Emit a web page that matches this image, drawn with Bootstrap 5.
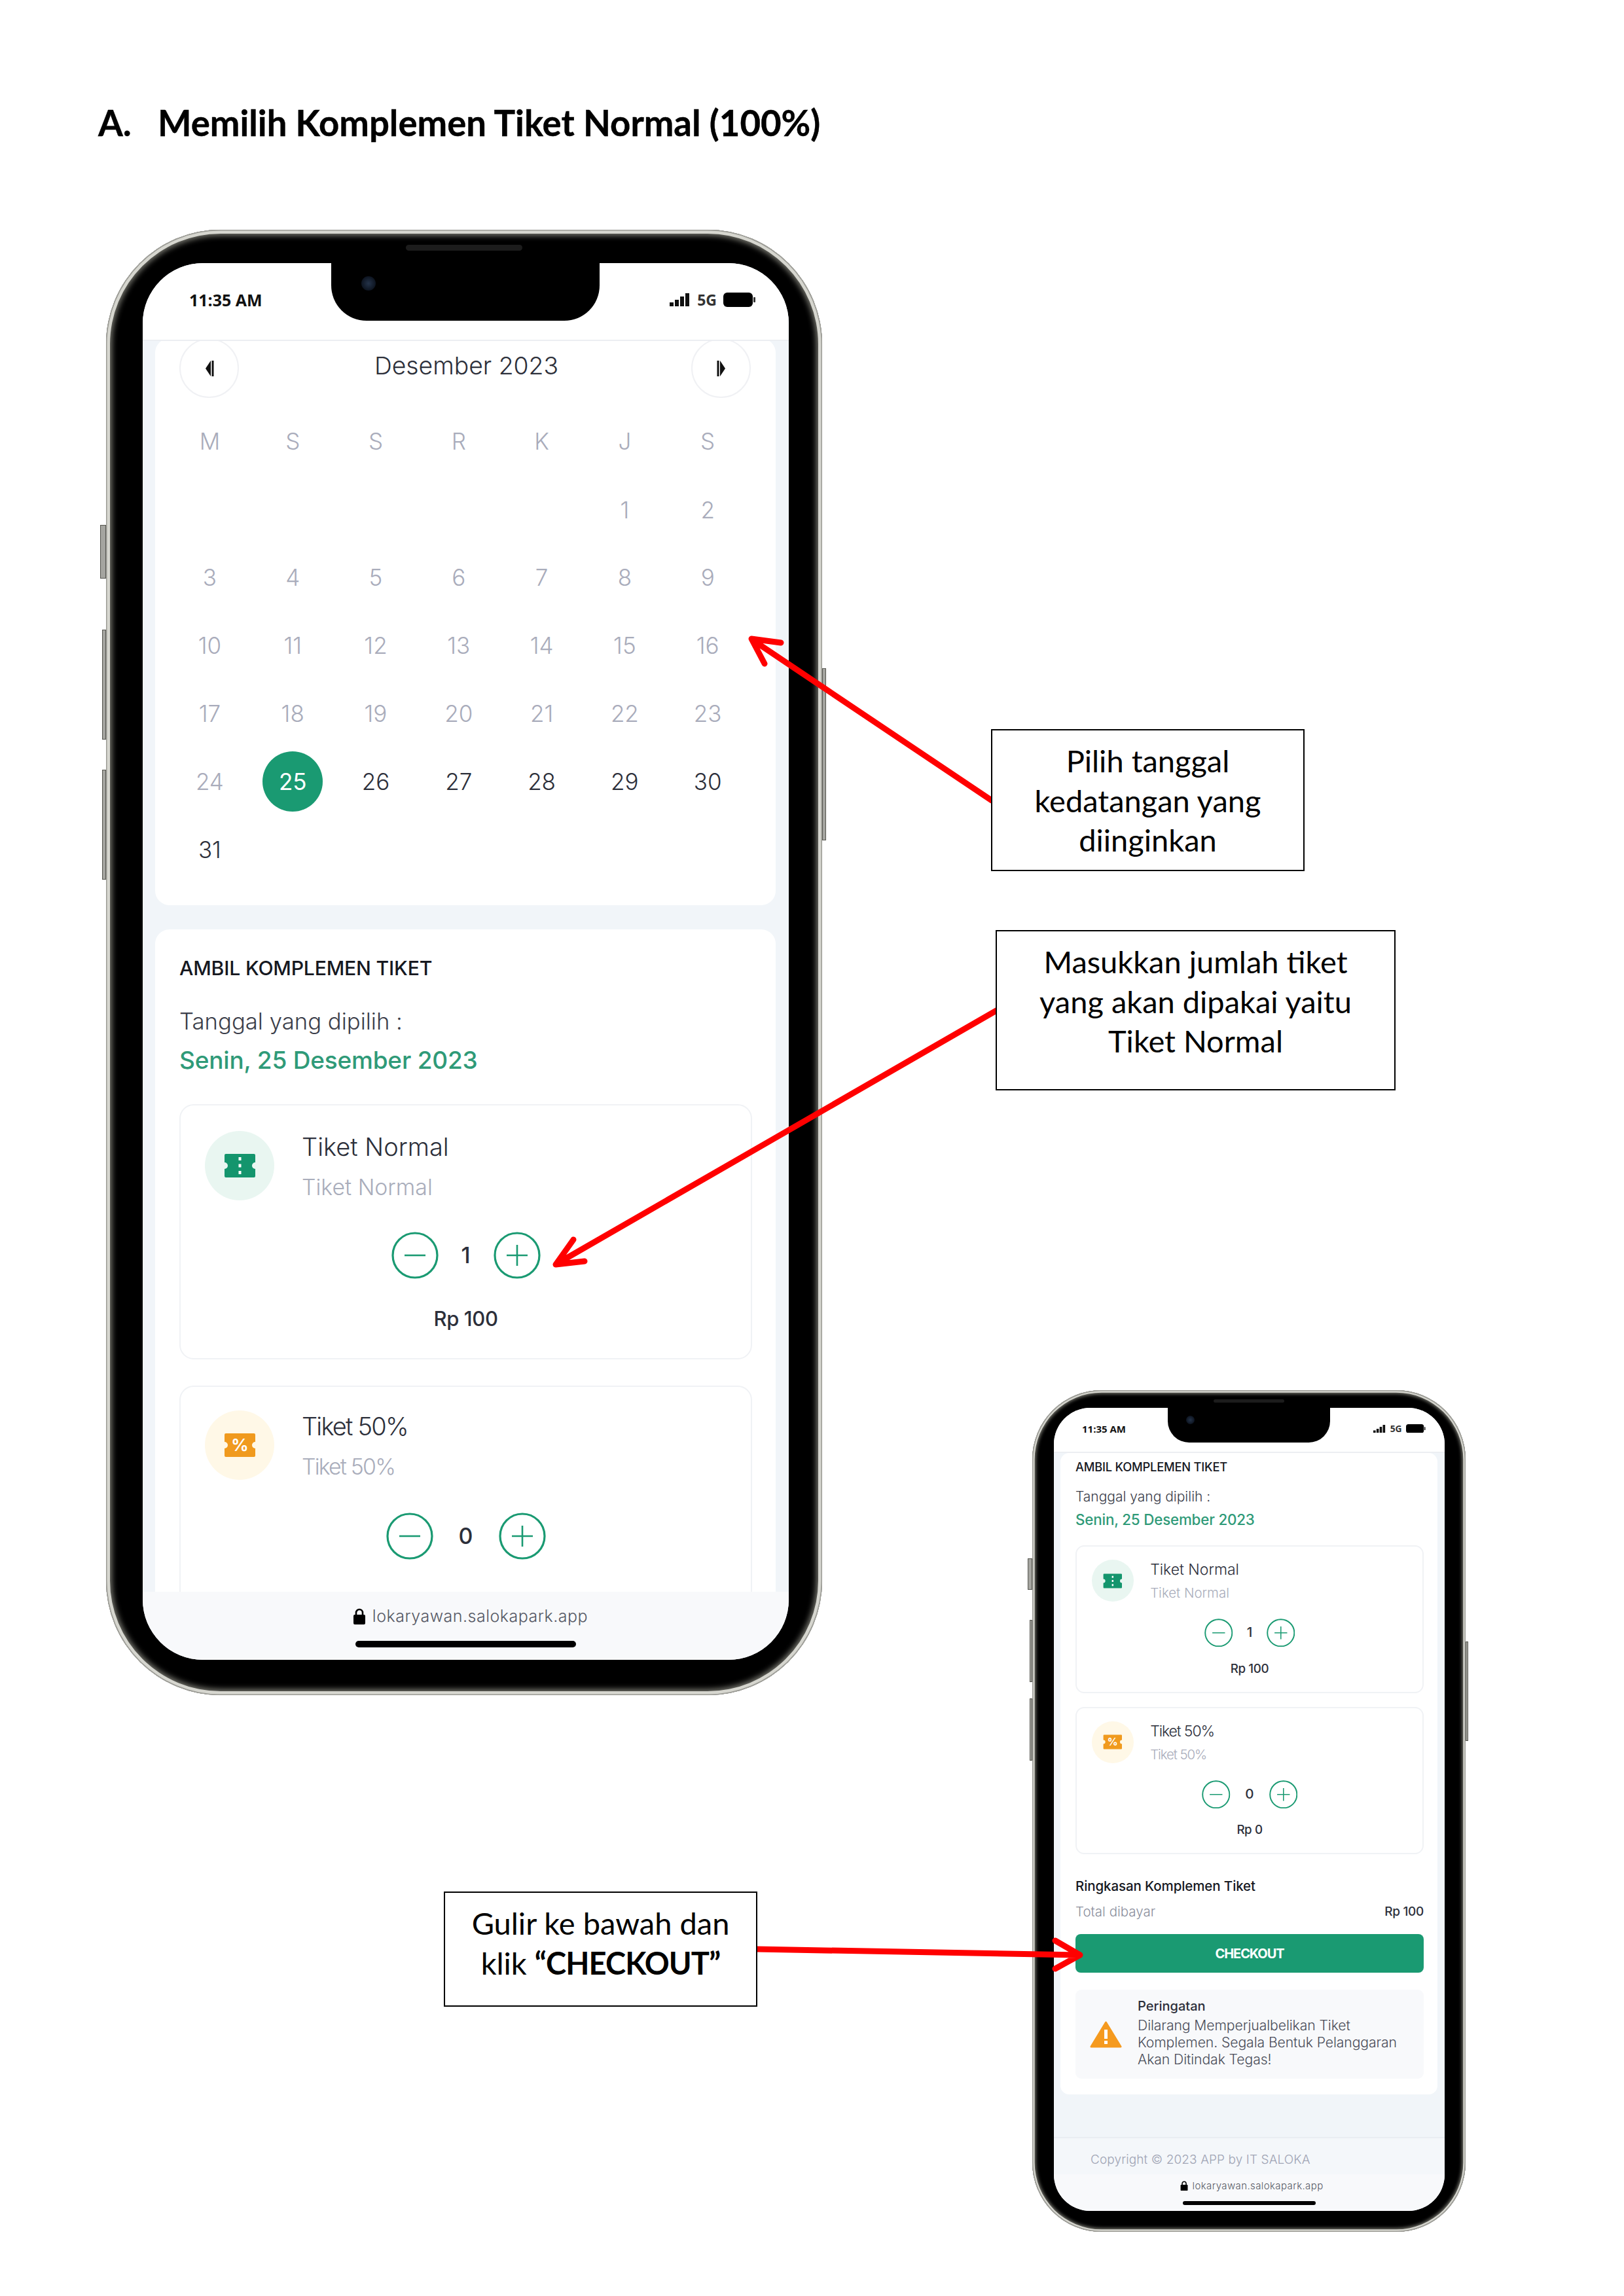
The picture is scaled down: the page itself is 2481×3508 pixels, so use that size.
<!DOCTYPE html>
<html lang="id">
<head>
<meta charset="utf-8">
<title>Memilih Komplemen Tiket Normal</title>
<link href="https://cdn.jsdelivr.net/npm/bootstrap@5.3.0/dist/css/bootstrap.min.css" rel="stylesheet">
<style>
body{margin:0;background:#fff}
.sheet{width:2481px;height:3508px;overflow:hidden;background:#fff;font-family:Inter,"Noto Sans",sans-serif}
.doc-title{padding:155px 0 0 150px;font-family:Lato,"Liberation Sans",sans-serif;font-weight:700;font-size:54.500px;line-height:64px;color:#000;-webkit-text-stroke:.4px #000}
.doc-title .num{width:91px}

.phone{position:absolute;background:#000;box-shadow:inset 0 0 0 1.500px #9c9c96,inset 0 0 0 calc(6px*var(--u)) #d6d6cf,inset 0 0 calc(9px*var(--u)) calc(9px*var(--u)) #77776f;display:flex}
.ph-lg{--u:1;left:162px;top:351px;width:1094px;height:2239px;border-radius:175px;padding:51px 51px 54px 56px}
.ph-sm{--u:.605;left:1577px;top:2124px;width:662px;height:1286px;border-radius:106px;padding:27px 32px 32px 33px}
.side-btn{position:absolute;background:#a5a5a0;border:1px solid #55554f}
.ph-lg .b1{left:-9px;top:451px;width:9px;height:82px}
.ph-lg .b2{left:-6px;top:611px;width:6px;height:168px}
.ph-lg .b3{left:-6px;top:825px;width:6px;height:168px}
.ph-lg .b4{right:-6px;top:670px;width:6px;height:263px}
.ph-sm .b1{left:-7px;top:257px;width:7px;height:48px}
.ph-sm .b2{left:-4px;top:351px;width:4px;height:95px}
.ph-sm .b3{left:-4px;top:471px;width:4px;height:95px}
.ph-sm .b4{right:-4px;top:384px;width:4px;height:152px}
.speaker{position:absolute;background:#1c1c1c;border-radius:5px;left:calc(458px*var(--u));width:calc(178px*var(--u));top:calc(23px*var(--u));height:calc(9px*var(--u))}

.screen{position:relative;flex:1 1 auto;min-width:0;background:#f1f5f9;overflow:hidden;display:flex;flex-direction:column;border-radius:calc(92px*var(--u))}
.notch{position:absolute;top:0;background:#000;z-index:3;left:calc(288px*var(--u));width:calc(410px*var(--u));height:calc(88px*var(--u));border-radius:0 0 calc(54px*var(--u)) calc(54px*var(--u))}
.cam{position:absolute;border-radius:50%;background:radial-gradient(circle,#243349 0,#0d1420 70%);left:calc(46px*var(--u));top:calc(20px*var(--u));width:calc(22px*var(--u));height:calc(22px*var(--u))}
.status{background:#fff;border-bottom:2px solid #eceef2;flex:0 0 auto;position:relative;z-index:2;font-family:"Open Sans",sans-serif;font-weight:700;color:#111}
.ph-lg .status{height:119px;padding:36px 50px 0 71px;font-size:25px;line-height:40px}
.ph-sm .status{height:69px;padding:20px 29px 0 43px;font-size:15px;line-height:24px}
.sig{width:calc(32px*var(--u));height:calc(20px*var(--u))}
.batt{width:calc(50px*var(--u));height:calc(22px*var(--u))}
.fiveg{font-size:calc(23px*var(--u));color:#333;margin:0 calc(10px*var(--u))}
.scroll{flex:1 1 0;min-height:0;overflow:hidden}

.panel{background:#fff;border-radius:calc(22px*var(--u))}
.ph-lg .panel{margin:0 20px 0 19px}
.ph-sm .panel{margin:0 11px 0 10px}
.cal-panel{padding:0 41px 33px 20px;margin-bottom:37px!important}
.cal-nav{margin-top:-4px;height:91px;position:relative}
.cal-nav .nav-c{width:91px;height:91px;border:2px solid #f0f1f4;background:#fff;position:absolute;top:0}
.nav-c.p1{left:17px}
.nav-c.p2{left:799px}
.cal-nav .mon{width:100%;padding-left:24px;text-align:center;font-size:37.300px;font-weight:300;line-height:84px;color:#2c2f3a}
.cal-grid{display:grid;grid-template-columns:repeat(7,126.8px);grid-template-rows:106px;grid-auto-rows:103.8px;margin-top:13px;font-size:35px;font-weight:300;color:#a9acbb}
.cal-grid>span{display:flex;align-items:center;justify-content:center}
.cal-grid .on{color:#2c2f3a}
.cal-grid .sel{background:#1a9a72;color:#fff;width:92px;height:92px;border-radius:50%;align-self:center;justify-self:center;font-weight:400}

.title{font-weight:500;color:#16181f;font-size:calc(30.2px*var(--u));letter-spacing:-.2px}
.chosen{font-weight:300;color:#3b3e4a;font-size:calc(34.7px*var(--u))}
.datev{font-weight:500;color:#2f9a78;font-size:calc(37px*var(--u));letter-spacing:-.2px}
.tname{font-weight:300;color:#2c2f3a;font-size:calc(38px*var(--u))}
.tsub{font-weight:300;color:#a9adbb;font-size:calc(33.800px*var(--u))}
.pct{letter-spacing:calc(-1.800px*var(--u))}
.price{font-weight:500;color:#2c2f3a;font-size:calc(31px*var(--u));letter-spacing:-.4px;text-align:center}
.qty{font-weight:500;color:#2c2f3a;font-size:calc(34px*var(--u));text-align:center}
.tbox{border:2px solid #f0f2f5;border-radius:calc(22px*var(--u))}
.ico{border-radius:50%;flex:0 0 auto;display:flex;align-items:center;justify-content:center;width:calc(106px*var(--u));height:calc(106px*var(--u))}
.ico svg{width:calc(49px*var(--u));height:calc(38px*var(--u))}
.ico.gr{background:#e9f6f1}
.ico.am{background:#fff8e7}
.rnd{width:calc(72px*var(--u));height:calc(72px*var(--u));flex:0 0 auto;display:block}

/* big phone flow */
.ph-lg .t-panel{padding:39px 36px 0 37px;height:1200px}
.ph-lg .title{line-height:40px}
.ph-lg .chosen{line-height:44px;margin-top:39px}
.ph-lg .datev{line-height:44px;margin-top:16px}
.ph-lg .tbox{margin-top:45px;padding:39px 37px 40px}
.ph-lg .tbox+.tbox{margin-top:40px;padding-top:36px;min-height:420px}
.ph-lg .tbox+.tbox .cnt{margin-top:50px}
.ph-lg .tgap{gap:42px}
.ph-lg .tname{line-height:44px;margin-top:2px}
.ph-lg .tsub{line-height:40px;margin-top:20px}
.ph-lg .cnt{margin-top:48px}
.ph-lg .price{line-height:40px;margin-top:41px}
.ph-lg .q1{width:84px}
.ph-lg .q0{width:100px}

/* small phone flow */
.ph-sm .t-panel{padding:9px 21px 24px 23px}
.ph-sm .title{line-height:24px}
.ph-sm .chosen{line-height:28px;margin-top:20px}
.ph-sm .datev{line-height:28px;margin-top:7px}
.ph-sm .tbox{margin-top:25px;padding:20px 23px 23px}
.ph-sm .tbox+.tbox{margin-top:21px}
.ph-sm .tgap{gap:25px}
.ph-sm .tname{line-height:28px;margin-top:1px}
.ph-sm .tsub{line-height:24px;margin-top:10px}
.ph-sm .cnt{margin-top:26px}
.ph-sm .price{line-height:24px;margin-top:21px}
.ph-sm .q1{width:51px}
.ph-sm .q0{width:59px}
.sum-h{font-weight:500;font-size:20.500px;line-height:26px;margin-top:36px;color:#16181f;letter-spacing:-.1px}
.sum-r{font-size:19px;line-height:26px;margin-top:13px}
.sum-r .lb{font-weight:300;color:#8b8f9d;font-size:20.500px}
.sum-r .vl{font-weight:500;color:#2c2f3a;letter-spacing:-.3px}
.pay{display:block;width:100%;margin-top:21px;height:59px;border-radius:8px;background:#1a9a72;border:0;color:#fff;font-weight:700;font-size:20px;letter-spacing:-1.100px}
.warnb{margin-top:26px;height:136px;background:#f8f9fb;border-radius:9px;padding:12px 10px 0 22px;gap:24px}
.warnb svg{width:49px;height:42px;flex:0 0 auto;margin-top:36px}
.warn-h{font-weight:500;font-size:20px;line-height:26px;color:#2c2f3a}
.warn-t{font-weight:300;font-size:21.200px;line-height:26px;color:#4a4d59;letter-spacing:-.1px;margin-top:3px;white-space:nowrap}
.foot{margin-top:65px;border-top:2px solid #e9edf2;background:#f4f7fa;height:60px;padding:21px 0 0 56px;font-weight:300;font-size:19px;line-height:24px;color:#9fa4b4;letter-spacing:.1px}

.urlbar{background:#f8f9fb;flex:0 0 auto;position:relative;font-weight:300;color:#565965;letter-spacing:.5px}
.ph-lg .urlbar{height:104px;padding-top:22px;font-size:25px;line-height:30px}
.ph-sm .urlbar{height:56px;padding-top:9px;font-size:15px;line-height:18px;letter-spacing:.4px}
.ph-lg .urlrow{padding-left:14px}
.ph-sm .urlrow{padding-left:8px}
.lock{width:calc(20px*var(--u));height:calc(25px*var(--u));margin-right:calc(10px*var(--u))}
.home{background:#000;border-radius:6px;width:calc(337px*var(--u))}
.ph-lg .home{height:10px;margin-top:23px}
.ph-sm .home{height:6px;margin-top:14px}

.note{position:absolute;border:2px solid #000;background:#fff;text-align:center;font-family:Lato,"Liberation Sans",sans-serif;font-size:47px;line-height:60.500px;color:#000;padding-top:16px;z-index:6}
.note b{font-weight:700;letter-spacing:-.9px}
.n1{left:1514px;top:1114px;width:479px;height:217px}
.n2{left:1521px;top:1421px;width:611px;height:245px}
.n3{left:678px;top:2890px;width:479px;height:176px}
.arrows{position:absolute;left:0;top:0;z-index:5;pointer-events:none}
.arrows *{fill:none;stroke:#f00;stroke-width:9;stroke-linecap:round;stroke-linejoin:round}
</style>
</head>
<body>
<svg width="0" height="0" class="position-absolute">
  <symbol id="tk" viewBox="0 0 49 38"><path d="M3 1H46a2 2 0 0 1 2 2V14a5 5 0 0 0 0 10V35a2 2 0 0 1-2 2H3a2 2 0 0 1-2-2V24a5 5 0 0 0 0-10V3a2 2 0 0 1 2-2Z"/></symbol>
  <symbol id="minus" viewBox="0 0 72 72"><circle cx="36" cy="36" r="34" fill="none" stroke="#1a9a72" stroke-width="3.200"/><path d="M20 36H52" fill="none" stroke="#1a9a72" stroke-width="2.600"/></symbol>
  <symbol id="plus" viewBox="0 0 72 72"><circle cx="36" cy="36" r="34" fill="none" stroke="#1a9a72" stroke-width="3.200"/><path d="M20 36H52M36 20V52" fill="none" stroke="#1a9a72" stroke-width="2.600"/></symbol>
  <symbol id="sg" viewBox="0 0 32 20"><rect x="0" y="14" width="6" height="6" fill="#111"/><rect x="8" y="10" width="6" height="10" fill="#111"/><rect x="16" y="5" width="6" height="15" fill="#111"/><rect x="24" y="0" width="6" height="20" fill="#111"/></symbol>
  <symbol id="bt" viewBox="0 0 50 22"><rect x="0" y="0" width="45" height="22" rx="6" fill="#000"/><rect x="46" y="7" width="3" height="8" rx="1" fill="#333"/></symbol>
  <symbol id="lk" viewBox="0 0 20 25"><path d="M5 11V7a5 5 0 0 1 10 0v4" fill="none" stroke="#000" stroke-width="2.600"/><rect x="1" y="10" width="18" height="15" rx="2" fill="#000"/></symbol>
</svg>

<div class="sheet position-relative">
  <div class="doc-title d-flex text-nowrap"><span class="num">A.</span><span>Memilih Komplemen Tiket Normal (100%)</span></div>

  <!-- big phone -->
  <div class="phone ph-lg">
    <span class="side-btn b1"></span><span class="side-btn b2"></span><span class="side-btn b3"></span><span class="side-btn b4"></span>
    <span class="speaker"></span>
    <div class="screen">
      <div class="notch"><span class="cam"></span></div>
      <div class="status d-flex justify-content-between align-items-start">
        <span>11:35 AM</span>
        <span class="d-flex align-items-center"><svg class="sig"><use href="#sg"/></svg><span class="fiveg">5G</span><svg class="batt"><use href="#bt"/></svg></span>
      </div>
      <div class="scroll">
        <div class="panel cal-panel">
          <div class="cal-nav d-flex">
            <span class="nav-c p1 rounded-circle d-flex align-items-center justify-content-center"><svg width="14" height="28" viewBox="0 0 14 26"><path d="M9 1 1 13l8 12Z" fill="#111"/><rect x="10.500" y="1" width="3" height="24" fill="#111"/></svg></span>
            <span class="mon">Desember 2023</span>
            <span class="nav-c p2 rounded-circle d-flex align-items-center justify-content-center"><svg width="14" height="28" viewBox="0 0 14 26"><path d="M5 1l8 12L5 25Z" fill="#111"/><rect x=".5" y="1" width="3" height="24" fill="#111"/></svg></span>
          </div>
          <div class="cal-grid">
            <span>M</span><span>S</span><span>S</span><span>R</span><span>K</span><span>J</span><span>S</span>
            <span></span><span></span><span></span><span></span><span></span><span>1</span><span>2</span>
            <span>3</span><span>4</span><span>5</span><span>6</span><span>7</span><span>8</span><span>9</span>
            <span>10</span><span>11</span><span>12</span><span>13</span><span>14</span><span>15</span><span>16</span>
            <span>17</span><span>18</span><span>19</span><span>20</span><span>21</span><span>22</span><span>23</span>
            <span>24</span><span class="sel">25</span><span class="on">26</span><span class="on">27</span><span class="on">28</span><span class="on">29</span><span class="on">30</span>
            <span class="on">31</span>
          </div>
        </div>
        <div class="panel t-panel">
          <div class="title">AMBIL KOMPLEMEN TIKET</div>
          <div class="chosen">Tanggal yang dipilih :</div>
          <div class="datev">Senin, 25 Desember 2023</div>
          <div class="tbox">
            <div class="d-flex tgap">
              <div class="ico gr"><svg viewBox="0 0 49 38" fill="#14956d"><use href="#tk" width="49" height="38"/><path d="M24.500 6v5M24.500 16.500v5M24.500 27v5" stroke="#fff" stroke-width="4" fill="none"/></svg></div>
              <div><div class="tname">Tiket Normal</div><div class="tsub">Tiket Normal</div></div>
            </div>
            <div class="cnt d-flex justify-content-center align-items-center">
              <svg class="rnd"><use href="#minus"/></svg><span class="qty q1">1</span><svg class="rnd"><use href="#plus"/></svg>
            </div>
            <div class="price">Rp 100</div>
          </div>
          <div class="tbox">
            <div class="d-flex tgap">
              <div class="ico am"><svg viewBox="0 0 49 38" fill="#f09a1e"><use href="#tk" width="49" height="38"/><text x="24.500" y="28" text-anchor="middle" fill="#fff" font-size="26" font-weight="700" font-family="Inter,sans-serif">%</text></svg></div>
              <div><div class="tname pct">Tiket 50%</div><div class="tsub pct">Tiket 50%</div></div>
            </div>
            <div class="cnt d-flex justify-content-center align-items-center">
              <svg class="rnd"><use href="#minus"/></svg><span class="qty q0">0</span><svg class="rnd"><use href="#plus"/></svg>
            </div>
          </div>
        </div>
      </div>
      <div class="urlbar text-center">
        <div class="urlrow d-flex justify-content-center align-items-center"><svg class="lock"><use href="#lk"/></svg>lokaryawan.salokapark.app</div>
        <div class="home mx-auto"></div>
      </div>
    </div>
  </div>

  <!-- small phone -->
  <div class="phone ph-sm">
    <span class="side-btn b1"></span><span class="side-btn b2"></span><span class="side-btn b3"></span><span class="side-btn b4"></span>
    <span class="speaker"></span>
    <div class="screen">
      <div class="notch"><span class="cam"></span></div>
      <div class="status d-flex justify-content-between align-items-start">
        <span>11:35 AM</span>
        <span class="d-flex align-items-center"><svg class="sig"><use href="#sg"/></svg><span class="fiveg">5G</span><svg class="batt"><use href="#bt"/></svg></span>
      </div>
      <div class="scroll">
        <div class="panel t-panel">
          <div class="title">AMBIL KOMPLEMEN TIKET</div>
          <div class="chosen">Tanggal yang dipilih :</div>
          <div class="datev">Senin, 25 Desember 2023</div>
          <div class="tbox">
            <div class="d-flex tgap">
              <div class="ico gr"><svg viewBox="0 0 49 38" fill="#14956d"><use href="#tk" width="49" height="38"/><path d="M24.500 6v5M24.500 16.500v5M24.500 27v5" stroke="#fff" stroke-width="4" fill="none"/></svg></div>
              <div><div class="tname">Tiket Normal</div><div class="tsub">Tiket Normal</div></div>
            </div>
            <div class="cnt d-flex justify-content-center align-items-center">
              <svg class="rnd"><use href="#minus"/></svg><span class="qty q1">1</span><svg class="rnd"><use href="#plus"/></svg>
            </div>
            <div class="price">Rp 100</div>
          </div>
          <div class="tbox">
            <div class="d-flex tgap">
              <div class="ico am"><svg viewBox="0 0 49 38" fill="#f09a1e"><use href="#tk" width="49" height="38"/><text x="24.500" y="28" text-anchor="middle" fill="#fff" font-size="26" font-weight="700" font-family="Inter,sans-serif">%</text></svg></div>
              <div><div class="tname pct">Tiket 50%</div><div class="tsub pct">Tiket 50%</div></div>
            </div>
            <div class="cnt d-flex justify-content-center align-items-center">
              <svg class="rnd"><use href="#minus"/></svg><span class="qty q0">0</span><svg class="rnd"><use href="#plus"/></svg>
            </div>
            <div class="price">Rp 0</div>
          </div>
          <div class="sum-h">Ringkasan Komplemen Tiket</div>
          <div class="sum-r d-flex justify-content-between"><span class="lb">Total dibayar</span><span class="vl">Rp 100</span></div>
          <button class="pay" type="button">CHECKOUT</button>
          <div class="warnb d-flex">
            <svg viewBox="0 0 49 42"><path d="M24.500 2 47 39H2Z" fill="#f59a1f" stroke="#f59a1f" stroke-width="3" stroke-linejoin="round"/><rect x="22" y="13" width="5" height="14" fill="#fff"/><rect x="22" y="30" width="5" height="5" fill="#fff"/></svg>
            <div>
              <div class="warn-h">Peringatan</div>
              <div class="warn-t">Dilarang Memperjualbelikan Tiket<br>Komplemen. Segala Bentuk Pelanggaran<br>Akan Ditindak Tegas!</div>
            </div>
          </div>
        </div>
        <div class="foot">Copyright © 2023 APP by IT SALOKA</div>
      </div>
      <div class="urlbar text-center">
        <div class="urlrow d-flex justify-content-center align-items-center"><svg class="lock"><use href="#lk"/></svg>lokaryawan.salokapark.app</div>
        <div class="home mx-auto"></div>
      </div>
    </div>
  </div>

  <svg class="arrows" width="2481" height="3508" viewBox="0 0 2481 3508">
    <path d="M1515 1223 1150 978M1193 982 1148 976 1168 1014"/>
    <path d="M1524 1543 852 1930M876 1894 849 1932 893 1927"/>
    <path d="M1155 2978 1646 2987M1612 2965 1650 2987 1612 3008"/>
  </svg>

  <div class="note n1">Pilih tanggal<br>kedatangan yang<br>diinginkan</div>
  <div class="note n2">Masukkan jumlah tiket<br>yang akan dipakai yaitu<br>Tiket Normal</div>
  <div class="note n3">Gulir ke bawah dan<br>klik <b>“CHECKOUT”</b></div>
</div>
<script src="https://cdn.jsdelivr.net/npm/bootstrap@5.3.0/dist/js/bootstrap.bundle.min.js"></script>
</body>
</html>
